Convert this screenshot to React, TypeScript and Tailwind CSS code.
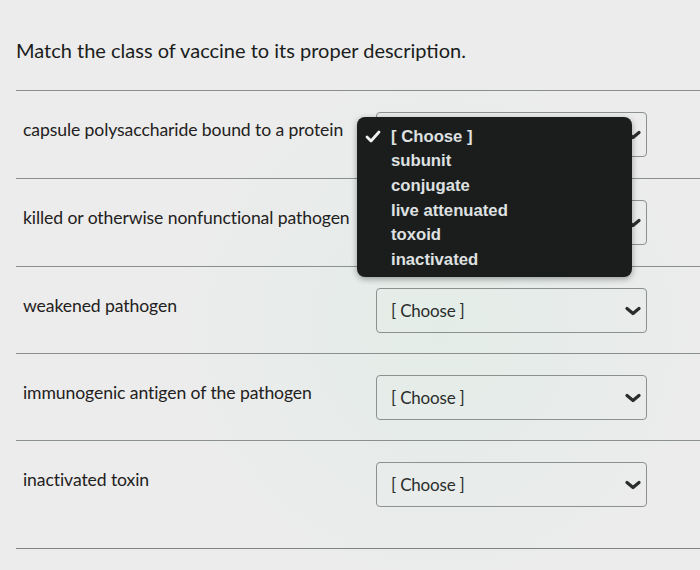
import React from "react";

const rows = [
  { label: "capsule polysaccharide bound to a protein", h: "h-[88px]" },
  { label: "killed or otherwise nonfunctional pathogen", h: "h-[88px]" },
  { label: "weakened pathogen", h: "h-[87px]" },
  { label: "immunogenic antigen of the pathogen", h: "h-[87px]" },
  { label: "inactivated toxin", h: "h-[108px]" },
];

const options = ["[ Choose ]", "subunit", "conjugate", "live attenuated", "toxoid", "inactivated"];

function Chevron() {
  return (
    <svg width="16" height="10" viewBox="0 0 16 10" className="text-[#2b2d2d]">
      <polyline points="2,2.5 8,7.5 14,2.5" fill="none" stroke="currentColor" strokeWidth="3.2" strokeLinecap="round" strokeLinejoin="round" />
    </svg>
  );
}

function SelectBox() {
  return (
    <div className="mt-[21px] ml-[6px] flex h-[45px] w-[271px] items-center justify-between rounded-[4px] border border-[#8b9090] pl-[14px] pr-[5px]">
      <span className="text-[17px] tracking-[-0.2px] text-[#2a2c2c]">[ Choose ]</span>
      <Chevron />
    </div>
  );
}

export default function App() {
  return (
    <div
      className="relative h-[570px] w-[700px] overflow-hidden bg-[#e9ebea] bg-[radial-gradient(circle_at_440px_330px,#e3ede7_0px,#e7ecea_120px,#ebeceb_260px)] text-[#1f2121]"
      style={{ fontFamily: "Lato, 'Open Sans', sans-serif" }}
    >
      <h1 className="pl-4 pt-[38px] text-[20px] leading-[24px] text-[#1a1c1c]">
        Match the class of vaccine to its proper description.
      </h1>

      <div className="ml-4 mt-[28px] border-b border-[#7d8282]">
        {rows.map((r) => (
          <div key={r.label} className={`flex items-start border-t border-[#8a8f8f] ${r.h}`}>
            <div className="w-[354px] pl-[7px] pt-[27px] text-[17.6px] leading-[24px] tracking-[-0.1px]">{r.label}</div>
            <SelectBox />
          </div>
        ))}
      </div>

      {/* open dropdown of the first select */}
      <div
        className="absolute left-[357px] top-[117px] h-[160px] w-[275px] rounded-[8px] bg-[#1b1d1d] pl-[8px] pt-[7px] shadow-[0_2px_6px_rgba(0,0,0,0.35)]"
        style={{ fontFamily: "'Liberation Sans', Arial, sans-serif" }}
      >
        {options.map((o, i) => (
          <div key={o} className="flex h-[24.6px] items-center text-[16.7px] font-bold text-[#dfe1e1]">
            <span className="flex w-[26px] items-center">
              {i === 0 && (
                <svg width="16" height="13" viewBox="0 0 16 13">
                  <polyline points="2,7 6,11 14,2" fill="none" stroke="#f2f2f2" strokeWidth="2.8" strokeLinecap="round" strokeLinejoin="round" />
                </svg>
              )}
            </span>
            <span>{o}</span>
          </div>
        ))}
      </div>
    </div>
  );
}
